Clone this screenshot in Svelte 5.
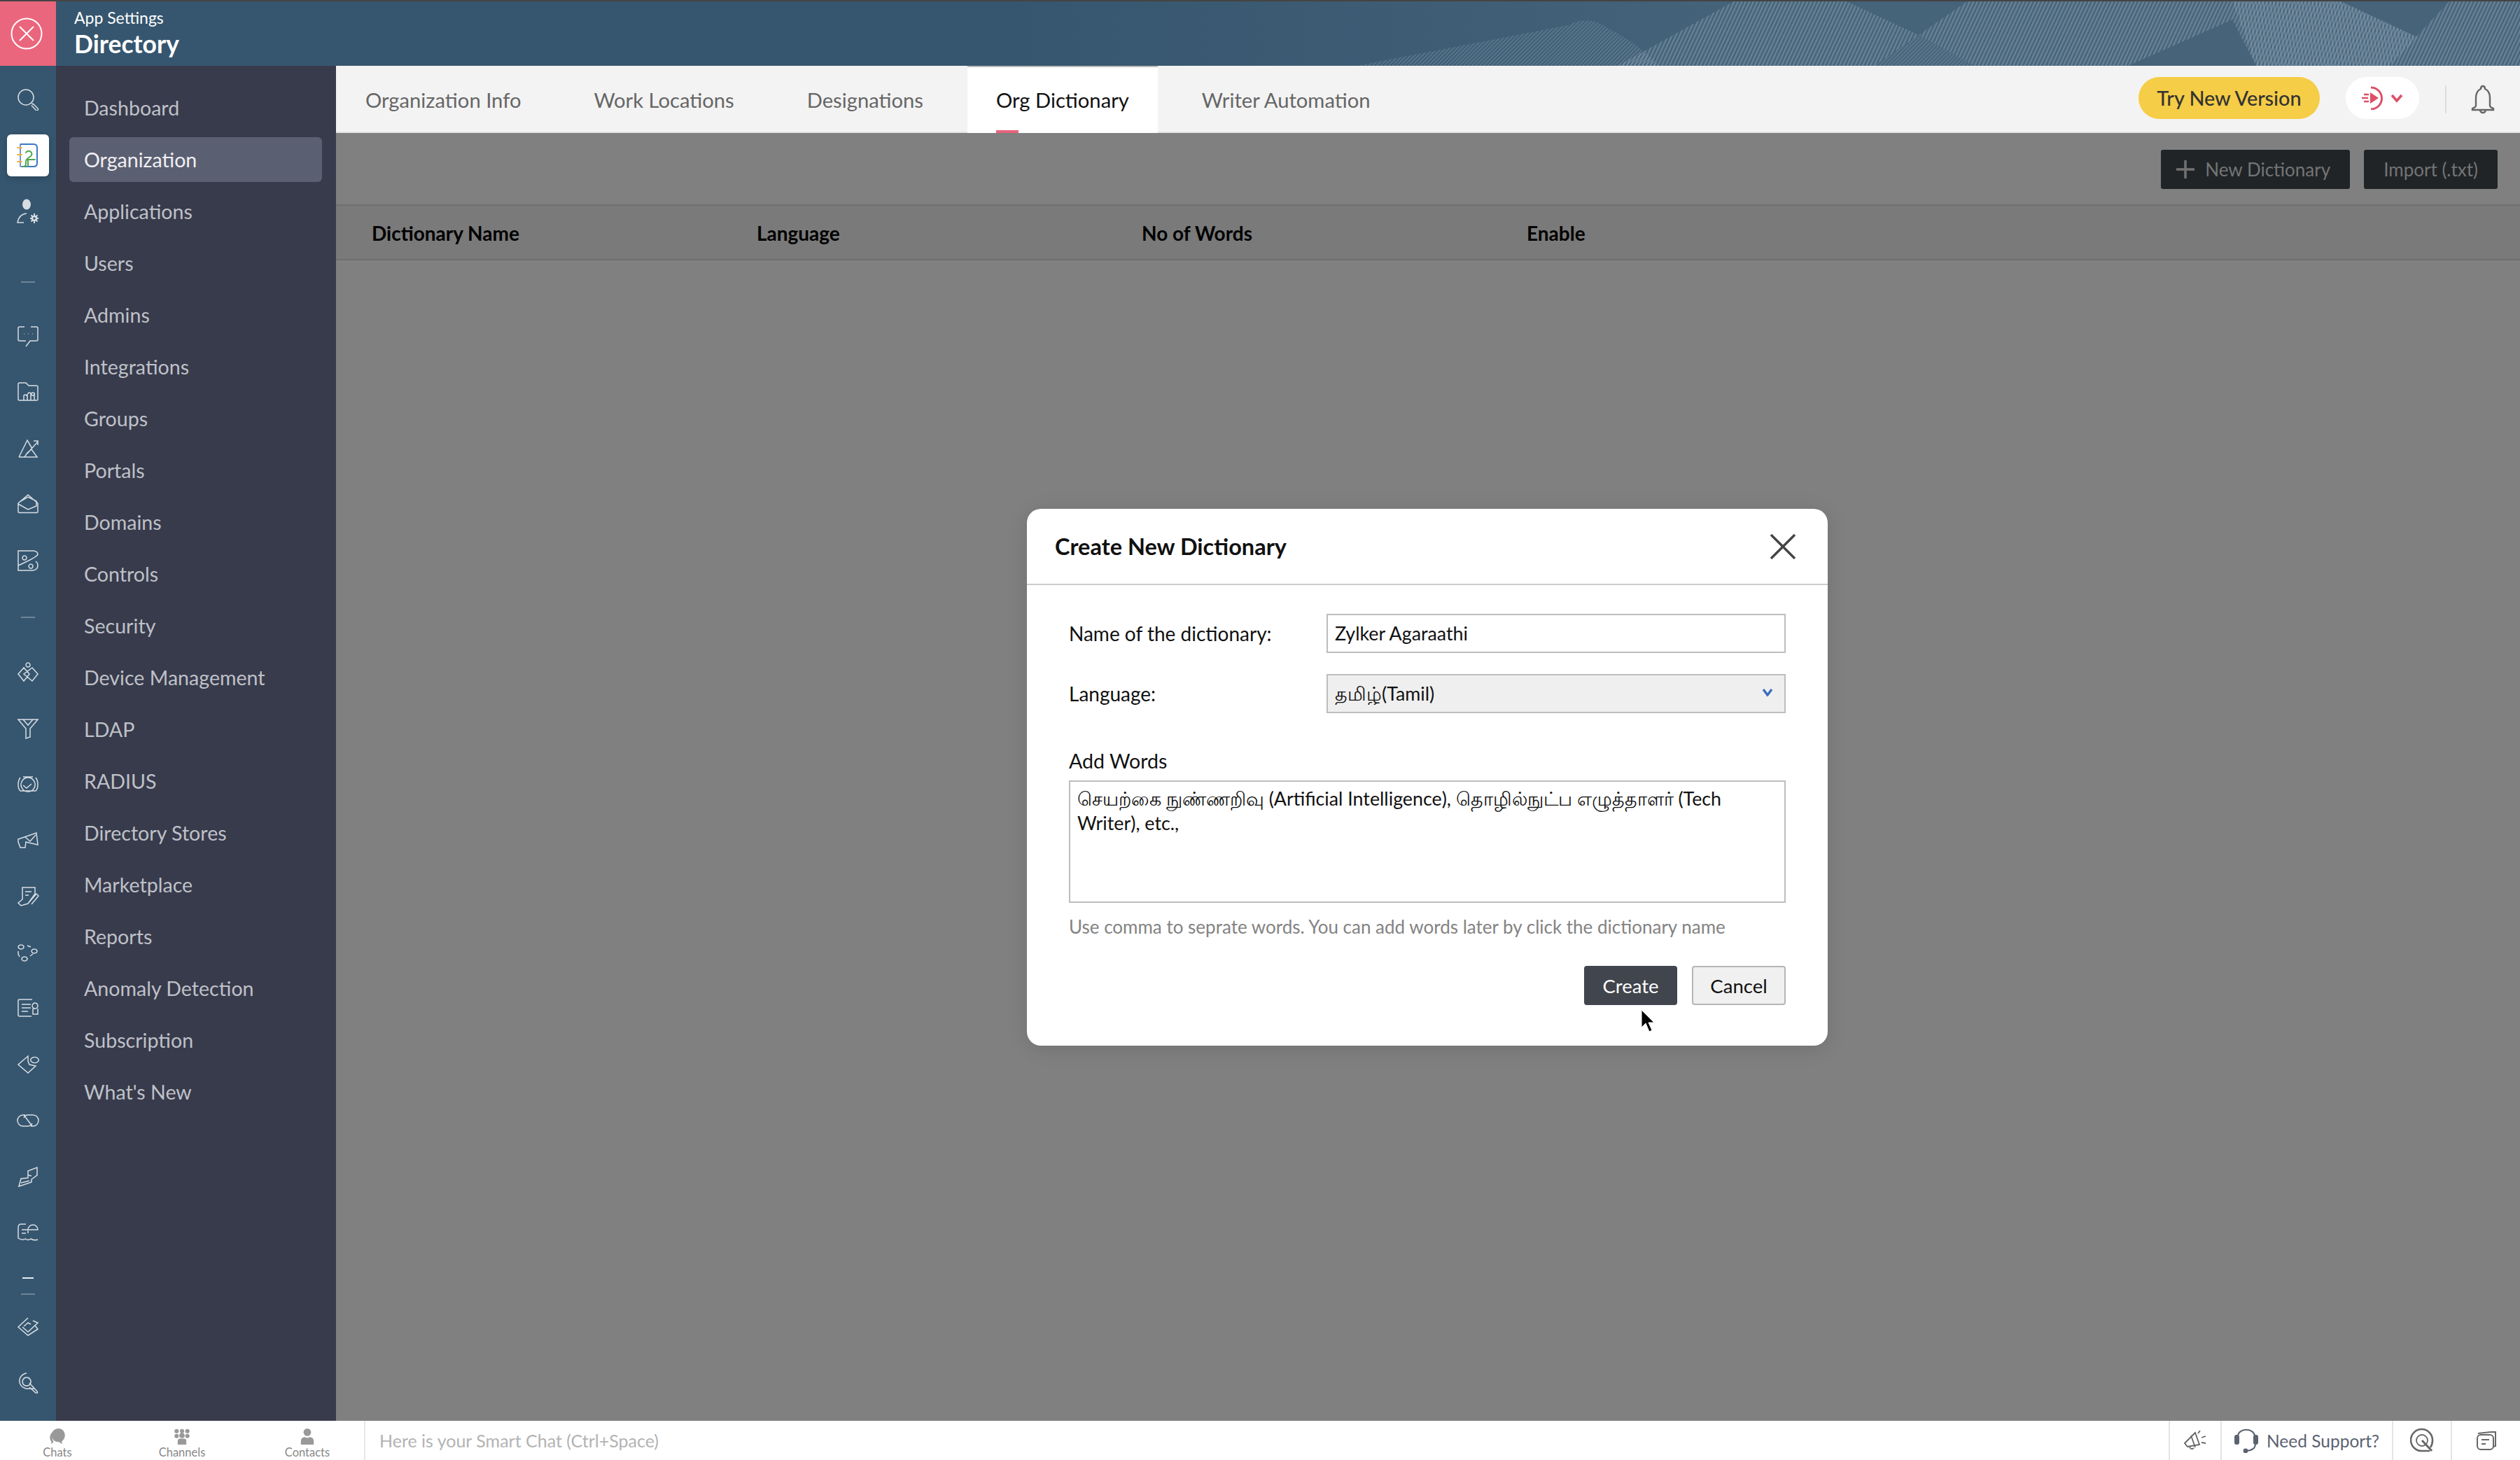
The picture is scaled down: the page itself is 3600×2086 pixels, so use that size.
<script>
  const navItems = [
    'Dashboard', 'Organization', 'Applications', 'Users', 'Admins', 'Integrations', 'Groups',
    'Portals', 'Domains', 'Controls', 'Security', 'Device Management', 'LDAP', 'RADIUS',
    'Directory Stores', 'Marketplace', 'Reports', 'Anomaly Detection', 'Subscription', "What's New"
  ];
  const tabs = ['Organization Info', 'Work Locations', 'Designations', 'Org Dictionary', 'Writer Automation'];
  const columns = ['Dictionary Name', 'Language', 'No of Words', 'Enable'];

  // rail icons, 32x32 outlines
  const railTop = [
    'M21.5 21.5l2 2M13 2a11 11 0 1 0 0 22a11 11 0 1 0 0-22zM23 22l7 7a1.6 1.6 0 0 1-2.6 2.4l-6.6-6.8'
  ];
  const groupA = [
    'M11 2H4a2 2 0 0 0-2 2v16a2 2 0 0 0 2 2h9M13 30l6-8h9a2 2 0 0 0 2-2V4a2 2 0 0 0-2-2h-8M10 12h.6M16 12h.6M22 12h.6',
    'M8 27H4a2 2 0 0 1-2-2V4a2 2 0 0 1 2-2h9l4 4h11a2 2 0 0 1 2 2v17a2 2 0 0 1-2 2h-3M10 27v-7M15 27v-9M20 27v-9M25 27v-10M10 21a2 2 0 1 1 4 0M16 18a2 2 0 1 1 4 0M23 16a2.4 2 0 1 0 .1 0M7 27h22',
    'M3 28L15 4l7 12M3 28h26l-8-11-6 5-4 6M15 23L30 6M24 5h6v6',
    'M2 14L16 2l14 12v12a1.5 1.5 0 0 1-1.5 1.5h-25A1.5 1.5 0 0 1 2 26zM2 15l14 8 12-5v-7L16 5 4 12',
    'M2 2h22q6 1 6 5-1 4-28 16zM2 23v7h21q7-1 7-7 0-4-3-6M11 9a3 3 0 1 0 .1 0M20 21a3 3 0 1 0 .1 0'
  ];
  const groupB = [
    'M16 2a3 3 0 1 0 .1 0M10 9L2 18l8 10 8-10zM22 9l-12 9 12 10 8-10z',
    'M2 3h28L19 16v12l-6 2V16zM9 3l7 8 7-8',
    'M9 5h14M5 6q-3 4-3 10t3 9h22q3-3 3-9t-3-10M9 17l5 4 7-6M16 6a10 10 0 1 0 .1 0',
    'M2 14l26-9 2 17-17-4-1 8-7 0-3-8zM12 11l7 6 8-9',
    'M8 3h18v9L16 26 6 29 2 25l6-5zM12 9h9M12 14h5M16 26l12-14 3 3-10 12',
    'M6 5a4 3 0 1 0 .1 0M25 11a4 3 0 1 0 .1 0M11 22a4 3 0 1 0 .1 0M15 6l5 2M2 14v4l2 4M19 21l4-3',
    'M22 3H4q-2 0-2 2v20q0 2 2 2h17M7 10h13M7 15h13M7 20h9M26 8a4 4 0 1 0 .1 0M23 16v8h7v-8',
    'M16 4L2 16l14 12 11-10-9-2-2-5zM21 7a5 3.5 0 1 0 9 5 5 3.5 0 1 0-9-5z',
    'M12 8H9a8 8 0 0 0 0 16h7a7 7 0 0 0 6-4M20 24h3a8 8 0 0 0 0-16h-7a7 7 0 0 0-6 4M10 8l12 16',
    'M3 30l3-11 10-1V8l13-5v11l-8 6v4L3 30zM6 25l12-3M16 14l5 1',
    'M13 4H6Q2 4 2 9v15q6 4 10 1 4 3 8 0 5 3 10 1M7 12h9M7 17h6M16 17V12a7 7 0 1 1 14 0h-13',
    'M16 3L2 16l14 12 14-9-4-5M10 15l6-5 4 2M8 16l8 7 14-13-7-3',
    'M14 2a12 11 0 1 0 4 22h8M14 8a6 6 0 1 0 .1 0M18 16l11 12q2 3-2 2l-9-8'
  ];

  const waveShapes = [
    { id: 'h1', d: 'M1938 94L2240 36Q2270 20 2300 42Q2340 62 2370 94Z' },
    { id: 'h2', d: 'M2311 94L2477 2H2638L2741 50L2810 2H3344L3453 53L3413 94H3223L3189 28L3040 94H2821L2741 50L2678 94Z' },
    { id: 'h3', d: 'M3189 2H3344L3453 53L3413 94H3223Z' },
    { id: 'h1', d: 'M2678 94L2741 50L2821 94Z' },
    { id: 'h2', d: 'M3413 94L3499 2H3600V94Z' }
  ];
</script>

<div class="app">
  <div class="strip"></div>
  <header class="topbar">
    <button class="close-app" aria-label="Close settings">
      <svg width="46" height="46" viewBox="0 0 46 46" fill="none" stroke="#fff" stroke-width="2">
        <circle cx="23" cy="23" r="21.5" />
        <path d="M13 13l20 20M33 13L13 33" />
      </svg>
    </button>
    <div class="titles">
      <span class="crumb">App Settings</span>
      <span class="title">Directory</span>
    </div>
    <svg class="waves" viewBox="1800 2 1800 92" width="1800" height="92" fill="none">
      <defs>
        <pattern id="h1" width="4" height="4" patternUnits="userSpaceOnUse" patternTransform="rotate(45)">
          <rect width="2" height="4" fill="#8fa5b8" opacity="0.3" />
        </pattern>
        <pattern id="h2" width="5" height="5" patternUnits="userSpaceOnUse" patternTransform="rotate(25)">
          <rect width="2.5" height="5" fill="#a0b3c4" opacity="0.38" />
        </pattern>
        <pattern id="h3" width="5" height="5" patternUnits="userSpaceOnUse" patternTransform="rotate(-8)">
          <rect width="2.5" height="5" fill="#a0b3c4" opacity="0.3" />
        </pattern>
      </defs>
      {#each waveShapes as shape}
        <path d={shape.d} fill="url(#{shape.id})" />
      {/each}
    </svg>
  </header>

  <div class="body">
    <nav class="rail">
      {#each railTop as d}
        <div class="rail-item"><svg class="ri" viewBox="0 0 32 32"><path {d} /></svg></div>
      {/each}
      <div class="rail-item active">
        <svg width="32" height="36" viewBox="0 0 32 36" fill="none" stroke-width="2" stroke-linecap="round">
          <path d="M6 2h18q5 0 5 5v22q0 5-5 5H7" stroke="#3d76c4" />
          <path d="M5 2v32" stroke="#3d76c4" stroke-width="1.5" />
          <path d="M9 34q4 0 4-4v-3q0-3 3-5l4-3q3-3 0-6-4-3-7 1" stroke="#4fa850" />
          <path d="M16 34V24h10" stroke="#4fa850" />
          <path d="M1 7h6M1 17h6M1 27h6" stroke="#f0b23c" />
        </svg>
      </div>
      <div class="rail-item">
        <svg width="32" height="36" viewBox="0 0 32 36" fill="none" stroke="#d7dde3" stroke-width="1.5">
          <ellipse cx="14" cy="8" rx="6" ry="7.5" fill="#d7dde3" stroke="none" />
          <path d="M14 21q-11 1-13 13h9" />
          <circle cx="25" cy="28" r="3" stroke-width="2.5" />
          <path d="M25 21v3M25 32v3M19 28h3M28 28h3M20.5 23.5l2 2M27.5 30.5l2 2M29.5 23.5l-2 2M22.5 30.5l-2 2" stroke-width="2" />
        </svg>
      </div>
      <div class="sep sep-a"></div>
      {#each groupA as d}
        <div class="rail-item"><svg class="ri" viewBox="0 0 32 32"><path {d} /></svg></div>
      {/each}
      <div class="sep sep-b"></div>
      {#each groupB.slice(0, 11) as d}
        <div class="rail-item"><svg class="ri" viewBox="0 0 32 32"><path {d} /></svg></div>
      {/each}
      <div class="dash"></div>
      <div class="sep sep-c"></div>
      {#each groupB.slice(11) as d}
        <div class="rail-item"><svg class="ri" viewBox="0 0 32 32"><path {d} /></svg></div>
      {/each}
    </nav>

    <aside class="sidebar">
      {#each navItems as item}
        <a class="nav-item" class:selected={item === 'Organization'} href="#top">{item}</a>
      {/each}
    </aside>

    <main class="main">
      <div class="tabbar">
        {#each tabs as tab}
          <div class="tab" class:current={tab === 'Org Dictionary'}>{tab}</div>
        {/each}
        <div class="tab-actions">
          <button class="try-btn">Try New Version</button>
          <div class="theme-pill">
            <svg width="62" height="34" viewBox="0 0 62 34" fill="none" stroke="#dd5068">
              <path d="M14 2a15.5 15.5 0 1 1 0 31" stroke-width="3" />
              <path d="M13 9l12 8-12 8z" fill="#dd5068" stroke="none" />
              <path d="M4 12h7M1 17h9M4 22h7" stroke-width="2.5" />
              <path d="M44 13l7 8 7-8" stroke-width="3.5" />
            </svg>
          </div>
          <div class="bar-divider"></div>
          <svg class="bell" width="34" height="42" viewBox="0 0 34 42" fill="none" stroke="#666" stroke-width="2.4">
            <path d="M17 2q3 0 3 4q7 3 7 13v11q0 2 5 4v2H2v-2q5-2 5-4V19q0-10 7-13q0-4 3-4z" />
            <path d="M13 36a4 4 0 0 0 8 0" />
          </svg>
        </div>
      </div>

      <div class="content">
        <div class="toolbar">
          <button class="dark-btn new-btn">
            <svg width="26" height="26" viewBox="0 0 26 26" stroke="#727272" stroke-width="3.5"><path d="M13 0v26M0 13h26" /></svg>
            New Dictionary
          </button>
          <button class="dark-btn">Import (.txt)</button>
        </div>
        <div class="table-head">
          {#each columns as col}
            <span>{col}</span>
          {/each}
        </div>

        <div class="modal">
          <div class="modal-head">
            <h2>Create New Dictionary</h2>
            <svg width="36" height="36" viewBox="0 0 36 36" stroke="#444" stroke-width="3.4"><path d="M1 1l34 34M35 1L1 35" /></svg>
          </div>
          <div class="modal-body">
            <div class="form-row">
              <label for="dict-name">Name of the dictionary:</label>
              <input id="dict-name" value="Zylker Agaraathi" />
            </div>
            <div class="form-row">
              <label for="dict-lang">Language:</label>
              <div class="select-wrap">
                <select id="dict-lang"><option>தமிழ்(Tamil)</option></select>
                <svg class="chev" width="16" height="12" viewBox="0 0 16 12" fill="none" stroke="#3d6fc0" stroke-width="3.4"><path d="M2 2l6 8 6-8" /></svg>
              </div>
            </div>
            <span class="words-label">Add Words</span>
            <div class="words-box">செயற்கை நுண்ணறிவு (Artificial Intelligence), தொழில்நுட்ப எழுத்தாளர் (Tech Writer), etc.,</div>
            <p class="hint">Use comma to seprate words. You can add words later by click the dictionary name</p>
            <div class="modal-actions">
              <button class="primary">Create</button>
              <button class="secondary">Cancel</button>
            </div>
          </div>
        </div>
        <svg class="cursor" width="22" height="34" viewBox="0 0 22 34">
          <path d="M2 1v25l6-6 5 12 4-2-5-11h8z" fill="#000" stroke="#fff" stroke-width="1" />
        </svg>
      </div>
    </main>
  </div>

  <footer class="bottom">
    <div class="chat-tabs">
      <div class="chat-tab">
        <svg width="28" height="30" viewBox="0 0 28 30" fill="#999">
          <path d="M16 0c7 0 12 6 12 12 0 6-3 10-6 12l1 5-6-4c-8 1-14-6-14-13C3 6 9 0 16 0z" />
          <path d="M4 7C1 11 0 14 0 17c0 4 2 6 3 8l-1 4 5-4q-5-8-3-18z" />
        </svg>
        <span>Chats</span>
      </div>
      <div class="chat-tab">
        <svg width="30" height="30" viewBox="0 0 30 30" fill="#999">
          <circle cx="5" cy="5" r="4" /><circle cx="15" cy="5" r="4" /><circle cx="25" cy="5" r="4" />
          <circle cx="5" cy="14" r="4" /><circle cx="25" cy="14" r="4" /><circle cx="15" cy="13" r="5" />
          <path d="M7 30v-7q0-4 4-4h8q4 0 4 4v7z" />
        </svg>
        <span>Channels</span>
      </div>
      <div class="chat-tab">
        <svg width="24" height="30" viewBox="0 0 24 30" fill="#999">
          <circle cx="12" cy="7" r="7" />
          <path d="M0 30v-6q0-8 8-8 4 3 8 0 8 0 8 8v6z" />
        </svg>
        <span>Contacts</span>
      </div>
    </div>
    <div class="smart-chat">Here is your Smart Chat (Ctrl+Space)</div>
    <div class="foot-cell announce">
      <svg width="34" height="34" viewBox="0 0 34 34" fill="none" stroke="#666" stroke-width="1.8">
        <path d="M2 21L17 6l6 17-17 3zM11 10l6 17M9 26q2 5 6 2" />
        <path d="M24 3l-3 4M26 13l6-2M26 20l6 1" />
      </svg>
    </div>
    <div class="foot-cell support">
      <svg width="34" height="36" viewBox="0 0 34 36" fill="none" stroke="#5b6270" stroke-width="2">
        <path d="M5 11C7 0 27 0 29 11" />
        <rect x="1" y="11" width="5" height="12" rx="2" fill="#5b6270" />
        <rect x="28" y="11" width="5" height="12" rx="2" fill="#5b6270" />
        <path d="M30 23q0 9-13 10" />
        <circle cx="16" cy="33" r="2.4" fill="#5b6270" />
      </svg>
      <span>Need Support?</span>
    </div>
    <div class="foot-cell zia">
      <svg width="34" height="36" viewBox="0 0 34 36" fill="none" stroke="#666" stroke-width="2.6">
        <path d="M28 33H17a15.5 15.5 0 1 1 15-15q0 6-3 10" />
        <circle cx="17" cy="18" r="8" stroke-width="1.8" />
        <path d="M17 18l14 15" stroke-width="3" />
      </svg>
    </div>
    <div class="foot-cell notes">
      <svg width="30" height="30" viewBox="0 0 30 30" fill="none" stroke="#666" stroke-width="2">
        <path d="M3 5l19-2h6v20l-3 1" />
        <rect x="2" y="7" width="23" height="21" rx="5" />
        <path d="M8 14h11M8 20h6" />
      </svg>
    </div>
  </footer>
</div>

<style>
  :global(body) {
    margin: 0;
    font-family: Lato, 'Noto Sans', 'Liberation Sans', sans-serif;
  }

  .app {
    width: 3600px;
    height: 2086px;
    display: flex;
    flex-direction: column;
    overflow: hidden;
  }

  .strip {
    height: 2px;
    background: #444;
  }

  .topbar {
    height: 92px;
    display: flex;
    align-items: stretch;
    position: relative;
    background: linear-gradient(90deg, #36566f 0%, #36566f 40%, #456379 70%, #476379 100%);
    color: #fff;
  }

  .close-app {
    width: 80px;
    border: 0;
    padding: 0 4px 0 0;
    background: #ea667d;
    display: flex;
    align-items: center;
    justify-content: center;
  }

  .titles {
    display: flex;
    flex-direction: column;
    padding: 9px 0 0 26px;
  }

  .crumb {
    font-size: 23px;
    line-height: 28px;
  }

  .title {
    font-size: 35.5px;
    font-weight: 700;
    line-height: 48px;
  }

  .waves {
    position: absolute;
    right: 0;
    top: 0;
  }

  .body {
    flex: 1;
    display: flex;
    min-height: 0;
  }

  .rail {
    width: 80px;
    flex: none;
    padding-top: 8px;
    box-sizing: border-box;
    background: #36566f;
    display: flex;
    flex-direction: column;
    align-items: center;
  }

  .rail-item {
    width: 60px;
    height: 80px;
    flex: none;
    display: flex;
    align-items: center;
    justify-content: center;
  }

  .rail-item.active {
    height: 60px;
    margin: 10px 0;
    background: #fff;
    border-radius: 6px;
    box-shadow: 0 3px 8px rgba(0, 0, 0, 0.2);
  }

  .ri {
    width: 32px;
    height: 32px;
    fill: none;
    stroke: #d7dde3;
    stroke-width: 1.5;
  }

  .sep {
    width: 20px;
    height: 2px;
    flex: none;
    background: #6d8599;
  }

  .sep-a { margin: 60px 0 37px; }
  .sep-b { margin: 40px 0 38px; }
  .sep-c { margin: 21px 0 6px; }

  .dash {
    width: 16px;
    height: 2px;
    flex: none;
    margin-top: 24px;
    background: #e8ecef;
  }

  .sidebar {
    width: 400px;
    flex: none;
    box-sizing: border-box;
    padding: 28px 20px 0 19px;
    background: #383b4c;
    display: flex;
    flex-direction: column;
    gap: 10px;
  }

  .nav-item {
    height: 64px;
    flex: none;
    padding-left: 21px;
    display: flex;
    align-items: center;
    border-radius: 6px;
    font-size: 28.6px;
    color: #bfc1c8;
    text-decoration: none;
  }

  .nav-item.selected {
    background: #5b5f72;
    color: #f0f0f2;
  }

  .main {
    flex: 1;
    min-width: 0;
    display: flex;
    flex-direction: column;
  }

  .tabbar {
    height: 96px;
    flex: none;
    box-sizing: border-box;
    padding-left: 1px;
    display: flex;
    gap: 22px;
    background: #f3f3f3;
    border-bottom: 2px solid #e4e4e4;
  }

  .tab {
    height: 96px;
    box-sizing: border-box;
    padding: 0 41px;
    display: flex;
    align-items: center;
    font-size: 29.2px;
    color: #666;
    position: relative;
  }

  .tab.current {
    background: #fff;
    color: #111;
    border-top: 2px solid #bbb;
    padding-bottom: 2px;
  }

  .tab.current::after {
    content: '';
    position: absolute;
    left: 41px;
    bottom: 0;
    width: 32px;
    height: 4px;
    background: #e9647c;
  }

  .tab-actions {
    margin-left: auto;
    display: flex;
    align-items: flex-start;
    padding: 16px 36px 0 0;
  }

  .try-btn {
    width: 259px;
    height: 60px;
    border: 0;
    border-radius: 30px;
    background: #f5cd46;
    color: #333;
    font: 500 28.8px Lato, sans-serif;
  }

  .theme-pill {
    width: 105px;
    height: 60px;
    margin-left: 37px;
    border-radius: 30px;
    background: #fff;
    display: flex;
    align-items: center;
    justify-content: center;
  }

  .bar-divider {
    width: 2px;
    height: 40px;
    margin: 12px 35px 0 37px;
    background: #ddd;
  }

  .bell {
    margin: 11px 0 0 0;
  }

  .content {
    flex: 1;
    position: relative;
    background: #808080;
  }

  .toolbar {
    height: 102px;
    box-sizing: border-box;
    padding: 24px 32px 0 0;
    display: flex;
    justify-content: flex-end;
    gap: 20px;
  }

  .dark-btn {
    height: 56px;
    padding: 0 28px;
    border: 0;
    border-radius: 3px;
    background: #202427;
    color: #747474;
    font: 400 26px Lato, sans-serif;
    display: flex;
    align-items: center;
    gap: 15px;
  }

  .new-btn {
    padding-left: 22px;
  }

  .table-head {
    height: 80px;
    box-sizing: border-box;
    padding: 2px 0 0 51px;
    display: grid;
    grid-template-columns: repeat(4, 550px);
    align-items: center;
    background: #7a7a7a;
    border-top: 2px solid #6f6f6f;
    border-bottom: 2px solid #6f6f6f;
    font-size: 28px;
    font-weight: 700;
    color: #000;
  }

  .modal {
    position: absolute;
    left: 987px;
    top: 537px;
    width: 1144px;
    height: 767px;
    background: #fff;
    border-radius: 20px;
    box-shadow: 0 4px 30px rgba(0, 0, 0, 0.12);
    color: #111;
  }

  .modal-head {
    height: 109px;
    box-sizing: border-box;
    padding: 0 46px 0 40px;
    display: flex;
    align-items: center;
    justify-content: space-between;
    border-bottom: 2px solid #ccc;
  }

  .modal-head h2 {
    margin: 0;
    font-size: 32.5px;
    font-weight: 700;
  }

  .modal-body {
    padding: 41px 60px 0;
    display: flex;
    flex-direction: column;
  }

  .form-row {
    height: 56px;
    margin-bottom: 30px;
    display: flex;
    align-items: center;
  }

  .form-row label {
    width: 368px;
    flex: none;
    font-size: 28px;
  }

  input, select, .words-box {
    box-sizing: border-box;
    border: 2px solid #bdbdbd;
    border-radius: 0;
    outline: 0;
    color: #111;
    font: 400 26.8px Lato, 'Noto Sans', sans-serif;
  }

  input, select {
    width: 656px;
    height: 56px;
    padding: 0 10px;
    display: block;
  }

  select {
    appearance: none;
    background: #efefef;
  }

  .select-wrap {
    position: relative;
  }

  .chev {
    position: absolute;
    right: 18px;
    top: 20px;
  }

  .words-label {
    margin-top: 19px;
    font-size: 28.6px;
    line-height: 38px;
    height: 47px;
  }

  .words-box {
    width: 1024px;
    height: 175px;
    padding: 7px 10px;
    line-height: 35px;
  }

  .hint {
    margin: 18px 0 0;
    font-size: 26px;
    line-height: 32px;
    color: #838383;
  }

  .modal-actions {
    margin-top: 40px;
    display: flex;
    justify-content: flex-end;
    gap: 21px;
  }

  .modal-actions button {
    height: 56px;
    border-radius: 4px;
    font: 400 27.5px Lato, sans-serif;
  }

  .primary {
    width: 133px;
    border: 0;
    background: #41454d;
    color: #fff;
  }

  .secondary {
    width: 134px;
    border: 2px solid #b5b5b5;
    background: #f0f0f0;
    color: #111;
  }

  .cursor {
    position: absolute;
    left: 1863px;
    top: 1252px;
  }

  .bottom {
    height: 56px;
    flex: none;
    display: flex;
    background: #fff;
    color: #666;
  }

  .chat-tabs {
    width: 522px;
    flex: none;
    box-sizing: border-box;
    display: grid;
    grid-template-columns: 164px 192px 166px;
    border-right: 2px solid #e8e8e8;
  }

  .chat-tab {
    padding-top: 11px;
    display: flex;
    flex-direction: column;
    align-items: center;
    color: #888;
    font-size: 16.5px;
    line-height: 14px;
  }

  .chat-tab svg {
    height: 23px;
    margin-bottom: 4px;
  }

  .smart-chat {
    flex: 1;
    padding-left: 20px;
    display: flex;
    align-items: center;
    font-size: 25px;
    color: #b3b3b3;
  }

  .foot-cell {
    box-sizing: border-box;
    border-left: 2px solid #e4e4e4;
    display: flex;
    align-items: center;
    justify-content: center;
  }

  .announce { width: 74px; }
  .support { width: 245px; gap: 12px; font-size: 24.5px; color: #5b6270; }
  .zia { width: 84px; }
  .notes { width: 99px; }
</style>
